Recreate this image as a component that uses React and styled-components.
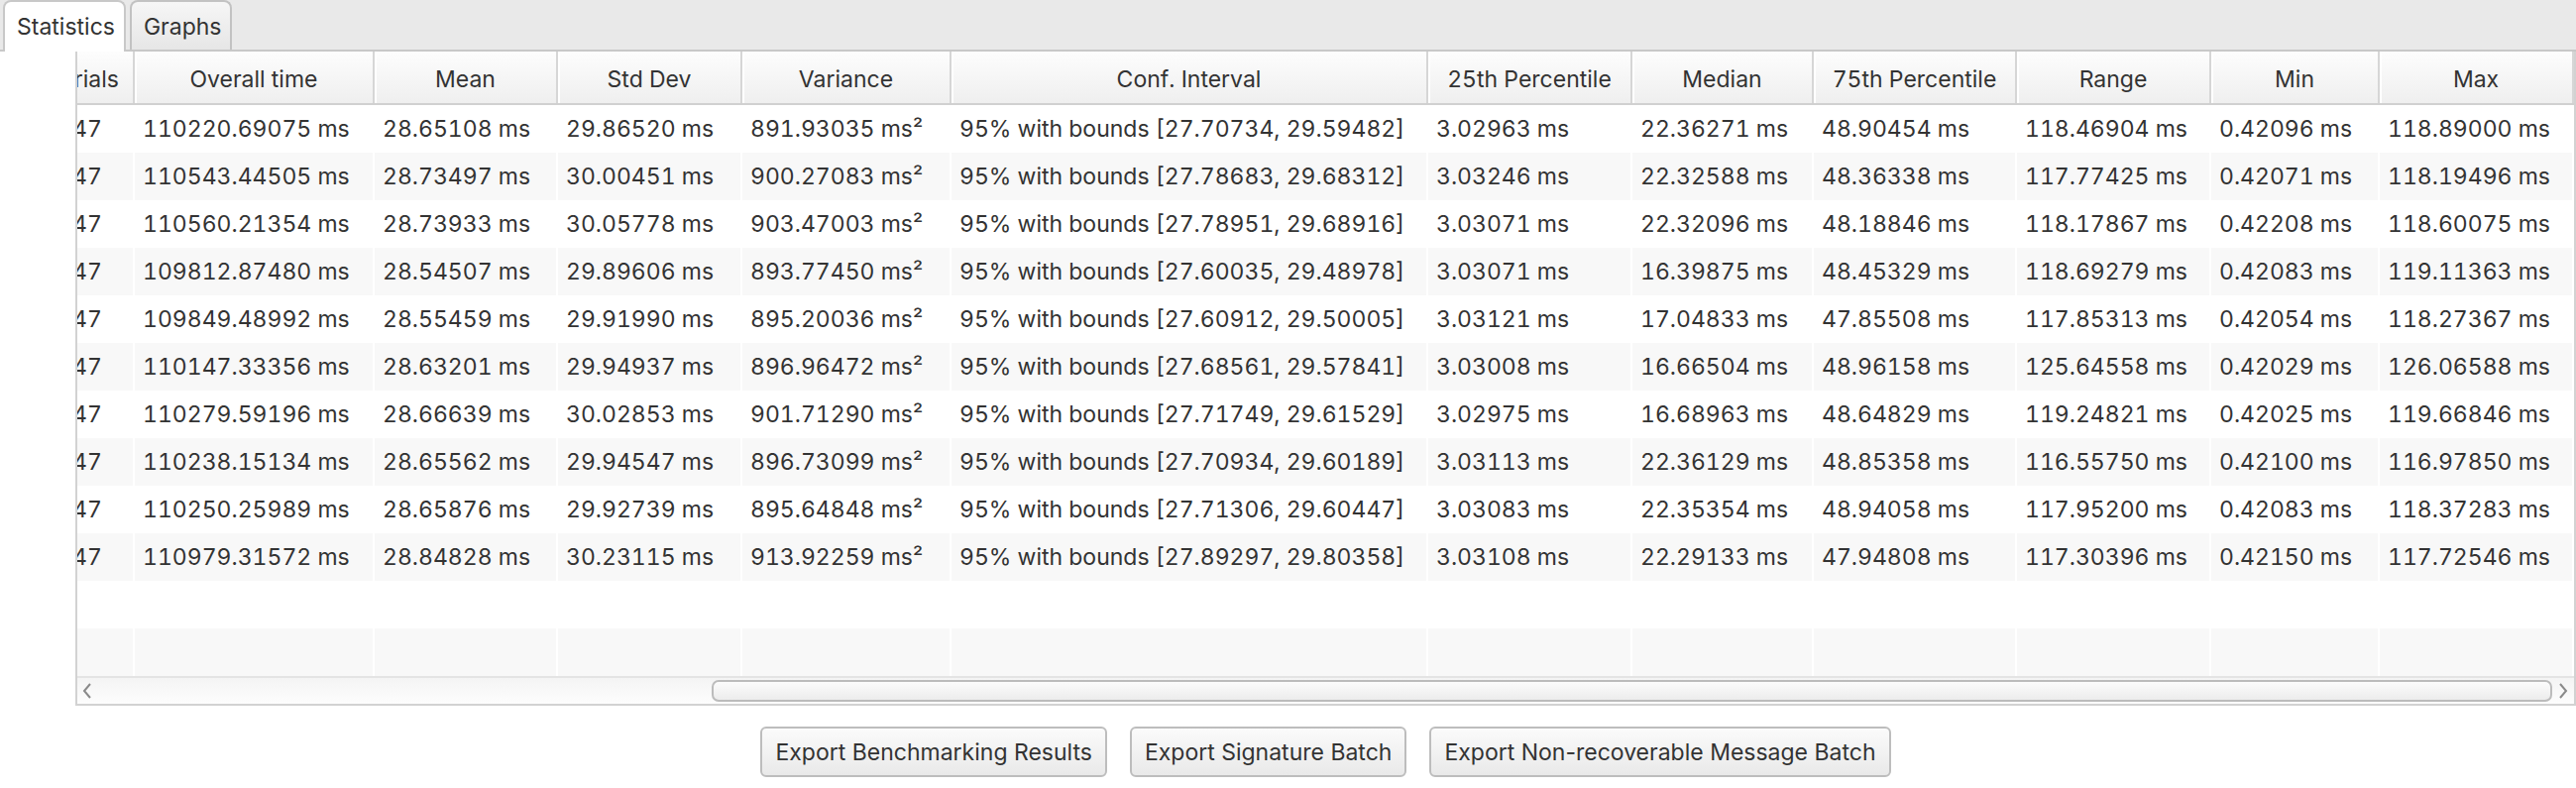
import React from 'react';
import styled, { createGlobalStyle, css } from 'styled-components';

const GlobalStyle = createGlobalStyle`
  html, body {
    margin: 0;
    padding: 0;
    background: #ffffff;
  }
  body {
    font-family: Inter, "Noto Sans", "Liberation Sans", sans-serif;
    color: #333333;
  }
  * { box-sizing: border-box; }
`;

const COLUMNS = [
  { title: 'Trials', width: 71 },
  { title: 'Overall time', width: 242 },
  { title: 'Mean', width: 185 },
  { title: 'Std Dev', width: 186 },
  { title: 'Variance', width: 211 },
  { title: 'Conf. Interval', width: 481 },
  { title: '25th Percentile', width: 206 },
  { title: 'Median', width: 183 },
  { title: '75th Percentile', width: 205 },
  { title: 'Range', width: 196 },
  { title: 'Min', width: 170 },
  { title: 'Max', width: 196 },
];

const ROWS = [
  ['47', '110220.69075 ms', '28.65108 ms', '29.86520 ms', '891.93035 ms²', '95% with bounds [27.70734, 29.59482]', '3.02963 ms', '22.36271 ms', '48.90454 ms', '118.46904 ms', '0.42096 ms', '118.89000 ms'],
  ['47', '110543.44505 ms', '28.73497 ms', '30.00451 ms', '900.27083 ms²', '95% with bounds [27.78683, 29.68312]', '3.03246 ms', '22.32588 ms', '48.36338 ms', '117.77425 ms', '0.42071 ms', '118.19496 ms'],
  ['47', '110560.21354 ms', '28.73933 ms', '30.05778 ms', '903.47003 ms²', '95% with bounds [27.78951, 29.68916]', '3.03071 ms', '22.32096 ms', '48.18846 ms', '118.17867 ms', '0.42208 ms', '118.60075 ms'],
  ['47', '109812.87480 ms', '28.54507 ms', '29.89606 ms', '893.77450 ms²', '95% with bounds [27.60035, 29.48978]', '3.03071 ms', '16.39875 ms', '48.45329 ms', '118.69279 ms', '0.42083 ms', '119.11363 ms'],
  ['47', '109849.48992 ms', '28.55459 ms', '29.91990 ms', '895.20036 ms²', '95% with bounds [27.60912, 29.50005]', '3.03121 ms', '17.04833 ms', '47.85508 ms', '117.85313 ms', '0.42054 ms', '118.27367 ms'],
  ['47', '110147.33356 ms', '28.63201 ms', '29.94937 ms', '896.96472 ms²', '95% with bounds [27.68561, 29.57841]', '3.03008 ms', '16.66504 ms', '48.96158 ms', '125.64558 ms', '0.42029 ms', '126.06588 ms'],
  ['47', '110279.59196 ms', '28.66639 ms', '30.02853 ms', '901.71290 ms²', '95% with bounds [27.71749, 29.61529]', '3.02975 ms', '16.68963 ms', '48.64829 ms', '119.24821 ms', '0.42025 ms', '119.66846 ms'],
  ['47', '110238.15134 ms', '28.65562 ms', '29.94547 ms', '896.73099 ms²', '95% with bounds [27.70934, 29.60189]', '3.03113 ms', '22.36129 ms', '48.85358 ms', '116.55750 ms', '0.42100 ms', '116.97850 ms'],
  ['47', '110250.25989 ms', '28.65876 ms', '29.92739 ms', '895.64848 ms²', '95% with bounds [27.71306, 29.60447]', '3.03083 ms', '22.35354 ms', '48.94058 ms', '117.95200 ms', '0.42083 ms', '118.37283 ms'],
  ['47', '110979.31572 ms', '28.84828 ms', '30.23115 ms', '913.92259 ms²', '95% with bounds [27.89297, 29.80358]', '3.03108 ms', '22.29133 ms', '47.94808 ms', '117.30396 ms', '0.42150 ms', '117.72546 ms'],
];

const EMPTY_ROWS = 2;
const gridColumns = COLUMNS.map((c) => `${c.width}px`).join(' ');

const Window = styled.div`
  width: 2599px;
  height: 795px;
  display: flex;
  flex-direction: column;
  overflow: hidden;
  background: #ffffff;
`;

const TabStrip = styled.div`
  height: 52px;
  flex: none;
  display: flex;
  align-items: flex-end;
  gap: 4px;
  padding-left: 3px;
  background: #e9e9e9;
  border-bottom: 2px solid #c8c8c8;
`;

const Tab = styled.div`
  height: 50px;
  display: flex;
  align-items: center;
  padding: 2px 9px 0 12px;
  border: 2px solid #c2c2c2;
  border-bottom: none;
  border-radius: 8px 8px 0 0;
  font-size: 23px;
  color: #333333;
  background: linear-gradient(#f6f6f6, #e6e6e6);
  ${({ $active }) =>
    $active &&
    css`
      height: 52px;
      margin-bottom: -2px;
      padding-bottom: 2px;
      background: #ffffff;
      border-color: #c8c8c8;
    `}
`;

const Content = styled.div`
  flex: 1;
  display: flex;
  flex-direction: column;
  padding-left: 76px;
  background: #ffffff;
`;

const Table = styled.div`
  height: 660px;
  display: flex;
  flex-direction: column;
  border: 2px solid #d2d2d2;
  border-top: none;
  background: #ffffff;
`;

const Viewport = styled.div`
  flex: 1;
  overflow: hidden;
`;

const Sheet = styled.div`
  margin-left: ${({ $scroll }) => -$scroll}px;
  width: max-content;
`;

const HeaderRow = styled.div`
  display: grid;
  grid-template-columns: ${gridColumns};
  height: 54px;
  border-bottom: 2px solid #d0d0d0;
  background: linear-gradient(#fdfdfd, #efefef);
`;

const HeaderCell = styled.div`
  display: flex;
  align-items: center;
  justify-content: ${({ $align }) => $align || 'center'};
  padding: 3px ${({ $padRight }) => $padRight || 6}px 0 6px;
  font-size: 23px;
  font-feature-settings: "tnum" 1;
  white-space: nowrap;
  overflow: hidden;
  color: #333333;
  border-right: 2px solid #d6d6d6;
  box-shadow: inset 2px 0 0 #ffffff;
`;

const Row = styled.div`
  display: grid;
  grid-template-columns: ${gridColumns};
  height: 48px;
  background: ${({ $odd }) => ($odd ? '#f8f8f8' : '#ffffff')};
`;

const Cell = styled.div`
  display: flex;
  align-items: center;
  padding-left: 8px;
  font-size: 23px;
  font-feature-settings: "tnum" 1;
  white-space: nowrap;
  overflow: hidden;
  color: #333333;
  border-right: 2px solid #ffffff;
`;

const ScrollBar = styled.div`
  height: 28px;
  flex: none;
  display: flex;
  align-items: center;
  border-top: 2px solid #e4e4e4;
  background: linear-gradient(#f4f4f4, #fdfdfd);
`;

const Arrow = styled.div`
  width: ${({ $w }) => $w}px;
  height: 100%;
  flex: none;
  display: flex;
  align-items: center;
  justify-content: center;
`;

const Track = styled.div`
  flex: 1;
  height: 100%;
  display: flex;
  align-items: center;
`;

const Thumb = styled.div`
  height: 22px;
  flex: 1;
  margin-left: ${({ $offset }) => $offset}px;
  border: 2px solid #bcbcbc;
  border-radius: 7px;
  background: linear-gradient(#fcfcfc, #ececec);
`;

const ButtonBar = styled.div`
  display: flex;
  justify-content: center;
  gap: 23px;
  padding-top: 21px;
`;

const Button = styled.button`
  height: 51px;
  padding: 0 13px;
  font-family: inherit;
  font-size: 23px;
  color: #333333;
  border: 2px solid #bdbdbd;
  border-radius: 6px;
  background: linear-gradient(#fbfbfb, #e9e9e9);
  cursor: pointer;
`;

const Chevron = ({ dir }) => (
  <svg width="10" height="16" viewBox="0 0 10 16">
    <path
      d={dir === 'left' ? 'M8 1 L2 8 L8 15' : 'M2 1 L8 8 L2 15'}
      fill="none"
      stroke="#8a8a8a"
      strokeWidth="2"
    />
  </svg>
);

export default function App() {
  return (
    <>
      <GlobalStyle />
      <Window>
        <TabStrip>
          <Tab $active>Statistics</Tab>
          <Tab>Graphs</Tab>
        </TabStrip>
        <Content>
          <Table>
            <Viewport>
              <Sheet $scroll={13}>
                <HeaderRow>
                  {COLUMNS.map((c, i) => (
                    <HeaderCell
                      key={c.title}
                      $align={i === 0 ? 'flex-end' : undefined}
                      $padRight={i === 0 ? 14 : undefined}
                    >
                      {c.title}
                    </HeaderCell>
                  ))}
                </HeaderRow>
                {ROWS.map((r, ri) => (
                  <Row key={ri} $odd={ri % 2 === 1}>
                    {r.map((v, ci) => (
                      <Cell key={ci}>{v}</Cell>
                    ))}
                  </Row>
                ))}
                {Array.from({ length: EMPTY_ROWS }).map((_, i) => (
                  <Row key={`e${i}`} $odd={(ROWS.length + i) % 2 === 1}>
                    {COLUMNS.map((c) => (
                      <Cell key={c.title} />
                    ))}
                  </Row>
                ))}
              </Sheet>
            </Viewport>
            <ScrollBar>
              <Arrow $w={20}>
                <Chevron dir="left" />
              </Arrow>
              <Track>
                <Thumb $offset={620} />
              </Track>
              <Arrow $w={22}>
                <Chevron dir="right" />
              </Arrow>
            </ScrollBar>
          </Table>
          <ButtonBar>
            <Button>Export Benchmarking Results</Button>
            <Button>Export Signature Batch</Button>
            <Button>Export Non-recoverable Message Batch</Button>
          </ButtonBar>
        </Content>
      </Window>
    </>
  );
}
